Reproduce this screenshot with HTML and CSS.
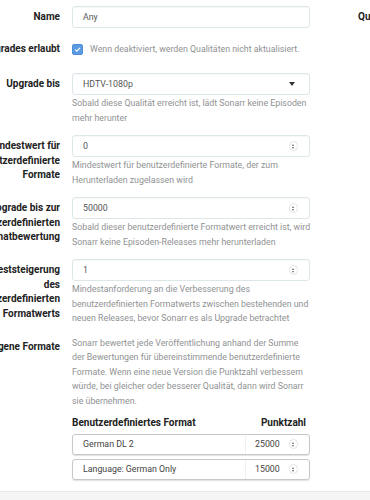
FILE: index.html
```html
<!DOCTYPE html>
<html>
  <head>
    <title>Qualitätsprofil bearbeiten</title>
    <meta charset="utf-8">
    <meta name="viewport" content="width=device-width">
    <link rel="stylesheet" href="styles.css">
  </head>
<body>
  <div class="page">
  <div class="form">

    <div class="group">
      <label class="label">Name</label>
      <div class="field"><div class="input">Any</div></div>
    </div>

    <div class="group check_group">
      <label class="label">Upgrades erlaubt</label>
      <div class="field check_field">
        <span class="checkbox">
          <svg width="11" height="11" viewBox="0 0 11 11"><path d="M2.6 5.6 L4.6 7.5 L8.6 3.4" fill="none" stroke="#fff" stroke-width="1.3"/></svg>
        </span>
        <span class="help inline">Wenn deaktiviert, werden Qualitäten nicht aktualisiert.</span>
      </div>
    </div>

    <div class="group">
      <label class="label">Upgrade bis</label>
      <div class="field">
        <div class="input select">HDTV-1080p<span class="caret"></span></div>
        <div class="help">Sobald diese Qualität erreicht ist, lädt Sonarr keine Episoden mehr herunter</div>
      </div>
    </div>

    <div class="group">
      <label class="label">Mindestwert für benutzerdefinierte Formate</label>
      <div class="field">
        <div class="input number">0<span class="spin"></span></div>
        <div class="help">Mindestwert für benutzerdefinierte Formate, der zum Herunterladen zugelassen wird</div>
      </div>
    </div>

    <div class="group">
      <label class="label">Upgrade bis zur benutzerdefinierten Formatbewertung</label>
      <div class="field">
        <div class="input number">50000<span class="spin"></span></div>
        <div class="help">Sobald dieser benutzerdefinierte Formatwert erreicht ist, wird Sonarr keine Episoden-Releases mehr herunterladen</div>
      </div>
    </div>

    <div class="group">
      <label class="label">Mindeststeigerung des benutzerdefinierten Formatwerts</label>
      <div class="field">
        <div class="input number">1<span class="spin"></span></div>
        <div class="help">Mindestanforderung an die Verbesserung des benutzerdefinierten Formatwerts zwischen bestehenden und neuen Releases, bevor Sonarr es als Upgrade betrachtet</div>
      </div>
    </div>

    <div class="group formats_group">
      <label class="label">Eigene Formate</label>
      <div class="field">
        <div class="help top">Sonarr bewertet jede Veröffentlichung anhand der Summe der Bewertungen für übereinstimmende benutzerdefinierte Formate. Wenn eine neue Version die Punktzahl verbessern würde, bei gleicher oder besserer Qualität, dann wird Sonarr sie übernehmen.</div>
        <div class="formats">
          <div class="formats_head"><span>Benutzerdefiniertes Format</span><span>Punktzahl</span></div>
          <div class="format_row">
            <span class="format_name">German DL 2</span>
            <span class="format_score">25000<span class="spin"></span></span>
          </div>
          <div class="format_row">
            <span class="format_name">Language: German Only</span>
            <span class="format_score">15000<span class="spin"></span></span>
          </div>
        </div>
      </div>
    </div>

  </div><!-- form -->
  <div class="side"><h3>Qualitäten</h3></div>
  </div><!-- page -->
  <footer class="footer"></footer>
</body>
</html>
```

FILE: styles.css
```css
* { margin: 0; padding: 0; box-sizing: border-box; }
html, body { height: 100%; overflow: hidden; }
body { font-family: Roboto, "Liberation Sans", sans-serif; font-size: 8.8px; line-height: 14.5px; color: #515253; background: #fff; }

.page { display: flex; margin-left: -38px; padding-top: 6px; width: 470px; }
.form { width: 348px; flex: none; }
.side { margin-left: 48px; }
.side h3 { font-size: 10px; font-weight: bold; color: #222; line-height: 22px; white-space: nowrap; }

.group { display: grid; grid-template-columns: 98px 238px; column-gap: 12px; margin-bottom: 10px; }
.label { font-size: 10px; font-weight: bold; color: #222; text-align: right; padding-top: 4px; }
.check_group { margin-top: 3px; margin-bottom: 13px; }
.formats_group { margin-top: 6px; }

.input { position: relative; height: 22px; line-height: 20px; padding-left: 10px; border: 1px solid #dde6e9; border-radius: 3px; color: #555; background: #fff; box-shadow: inset 0 1px 1px rgba(0,0,0,0.03); }
.caret { position: absolute; right: 14px; top: 8px; border-left: 3.5px solid transparent; border-right: 3.5px solid transparent; border-top: 4px solid #333; }
.number .spin { position: absolute; right: 11px; top: 5px; }

.spin { display: inline-block; width: 9px; height: 10px; border: 1px solid #e4e4e4; border-radius: 5px; vertical-align: middle; position: relative; }
.spin:before, .spin:after { content: ""; position: absolute; left: 2px; border-left: 1.5px solid transparent; border-right: 1.5px solid transparent; }
.spin:before { top: 1.5px; border-bottom: 2px solid #666; }
.spin:after { bottom: 1.5px; border-top: 2px solid #666; }

.check_field { display: flex; align-items: center; height: 22px; }
.checkbox { width: 11px; height: 11px; border-radius: 2px; background: #5b9be2; border: 1px solid #4f8fd8; display: inline-flex; align-items: center; justify-content: center; margin-right: 7px; flex: none; }
.checkbox svg { display: block; }

.help { color: #909293; margin-top: 1px; margin-right: -1px; }
.help.inline { margin-top: 0; white-space: nowrap; }
.help.top { margin-top: 0; }

.formats { margin-top: 8px; }
.formats_head { display: flex; justify-content: space-between; font-size: 10px; font-weight: bold; color: #222; padding: 0 4px 0 0; margin-bottom: 3px; }
.format_row { display: flex; height: 21px; line-height: 19px; margin-bottom: 4px; border: 1px solid #c8c8c8; border-radius: 3px; box-shadow: 0 1px 1px rgba(0,0,0,0.12); color: #444; }
.format_name { flex: 1; padding-left: 10px; }
.format_score { width: 64px; border-left: 1px solid #f0f0f0; padding-left: 9px; display: flex; align-items: center; gap: 9px; }

.footer { position: fixed; left: 0; right: 0; bottom: 0; height: 9px; background: #f5f5f5; border-top: 1px solid #e8e8e8; }
```
